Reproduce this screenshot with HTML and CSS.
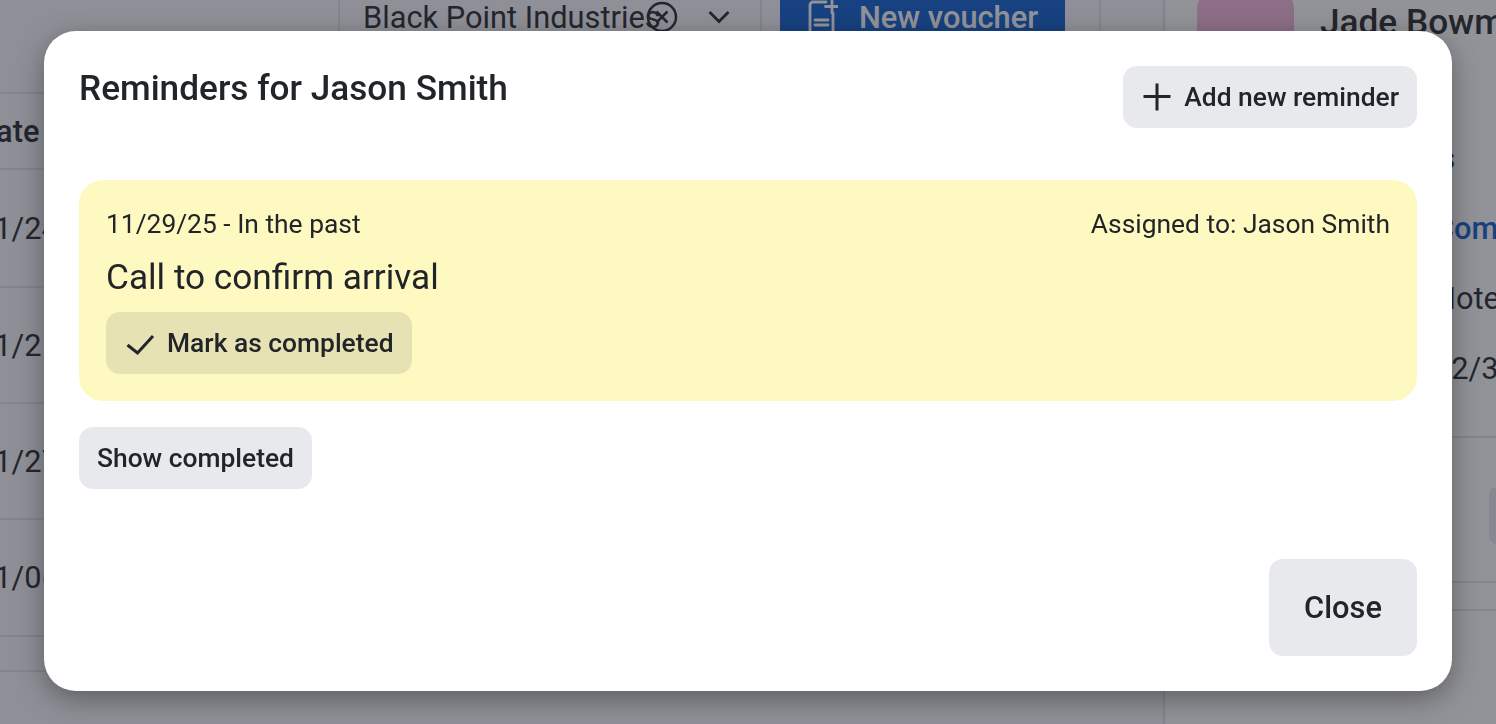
FILE: index.html
```html
<!DOCTYPE html>
<html lang="en">
<head>
  <meta charset="UTF-8" />
  <title>Reminders for Jason Smith</title>
  <link rel="stylesheet" href="styles.css">
</head>
<body>
  <!-- page behind the modal -->
  <div class="page">
    <div class="table-col">
      <div class="head-row"><span>Date</span></div>
      <div class="row r1"><span>11/24/25</span></div>
      <div class="row r2"><span>11/21/25</span></div>
      <div class="row r3"><span>11/27/25</span></div>
      <div class="row r4"><span>11/06/25</span></div>
      <div class="row r5"></div>
    </div>
    <div class="toolbar">
      <div class="company">
        <span class="company-name">Black Point Industries</span>
        <svg class="clear-icon" viewBox="0 0 32 32" width="32" height="32"><circle cx="16" cy="16" r="14" /><path d="M10.5 10.5l11 11M21.5 10.5l-11 11" /></svg>
        <svg class="chev-icon" viewBox="0 0 24 24" width="24" height="24"><path d="M2.5 7l9.5 9.5L21.5 7" /></svg>
      </div>
      <div class="voucher">
        <svg class="voucher-icon" viewBox="0 0 32 40" width="32" height="40"><path d="M20 5H7a3 3 0 0 0-3 3v26a3 3 0 0 0 3 3h17a3 3 0 0 0 3-3V16M26 3v13M19.5 9.5h13M9 23h13M9 28h13" /></svg>
        <span>New voucher</span>
      </div>
      <div class="toolbar-sep"></div>
    </div>
    <div class="side">
      <div class="person">
        <div class="avatar"></div>
        <div class="person-name">Jade Bowman</div>
      </div>
      <div class="side-info">
        <div class="side-row side-label">Details</div>
        <div class="side-row side-link">Company</div>
        <div class="side-row">Notes</div>
        <div class="side-row">12/31/25</div>
      </div>
      <div class="side-actions"><div class="side-btn"></div></div>
      <div class="side-foot"></div>
    </div>
  </div>

  <div class="overlay"></div>

  <div class="modal">
    <div class="modal-head">
      <h2>Reminders for Jason Smith</h2>
      <button class="btn btn-add">
        <svg viewBox="0 0 30 30" width="30" height="30"><path d="M15 1.5v27M1.5 14.5h27" /></svg>
        Add new reminder
      </button>
    </div>

    <div class="reminder">
      <div class="reminder-top">
        <span>11/29/25 - In the past</span>
        <span>Assigned to: Jason Smith</span>
      </div>
      <div class="reminder-title">Call to confirm arrival</div>
      <button class="btn btn-mark">
        <svg viewBox="0 0 30 30" width="30" height="30"><path d="M2.5 17l10 8L28 8" /></svg>
        Mark as completed
      </button>
    </div>

    <button class="btn btn-show">Show completed</button>

    <div class="modal-foot">
      <button class="btn btn-close">Close</button>
    </div>
  </div>
</body>
</html>
```

FILE: styles.css
```css
:root {
  --text-color: #212529;
  --btn-grey: #e8e9ed;
  --line: #dee2e6;
}
body {
  margin: 0;
  overflow: hidden;
  font-family: Roboto, sans-serif;
  color: var(--text-color);
  background: #fff;
}

/* page behind the modal */
.page {
  height: 724px;
  overflow: hidden;
  display: flex;
  font-size: 30.8px;
}
.table-col {
  width: 338px;
  flex: none;
  padding-top: 92px;
  background: #f8f8fc;
}
.head-row, .row {
  box-sizing: border-box;
  display: flex;
  align-items: center;
  white-space: nowrap;
  border-bottom: 2px solid var(--line);
}
.head-row {
  height: 78px;
  border-top: 2px solid var(--line);
  font-weight: 500;
}
.head-row span {
  margin-left: -24px;
}
.row span {
  margin-left: -23px;
}
.r1 { height: 118px; }
.r2 { height: 116px; }
.r3 { height: 116px; }
.r4 { height: 117px; }
.r5 { height: 35px; }

.toolbar {
  width: 825px;
  flex: none;
  display: flex;
  align-items: flex-start;
  background: #f8f8fc;
}
.company {
  width: 424px;
  height: 35px;
  flex: none;
  box-sizing: border-box;
  border-left: 2px solid var(--line);
  border-right: 2px solid var(--line);
  padding-left: 23px;
  line-height: 35px;
  position: relative;
}
.company-name {
  white-space: nowrap;
}
.clear-icon {
  position: absolute;
  left: 306px;
  top: 1px;
}
.clear-icon circle, .clear-icon path {
  fill: none;
  stroke: var(--text-color);
  stroke-width: 2.5;
}
.chev-icon {
  position: absolute;
  left: 367px;
  top: 5px;
}
.chev-icon path {
  fill: none;
  stroke: var(--text-color);
  stroke-width: 2.8;
}
.voucher {
  margin-left: 18px;
  width: 285px;
  height: 40px;
  flex: none;
  display: flex;
  align-items: flex-start;
  gap: 21px;
  padding-left: 26px;
  box-sizing: border-box;
  background: #0a5bd0;
  color: #fff;
  font-weight: 500;
}
.voucher-icon {
  margin-top: -3px;
}
.voucher-icon path {
  fill: none;
  stroke: #fff;
  stroke-width: 2.8;
  stroke-linecap: round;
}
.voucher span {
  line-height: 35px;
}
.toolbar-sep {
  margin-left: 34px;
  width: 2px;
  height: 40px;
  background: var(--line);
}

.side {
  flex: 1;
  min-width: 0;
  border-left: 2px solid var(--line);
}
.person {
  display: flex;
  gap: 26px;
  padding-left: 32px;
  margin-top: -8px;
}
.avatar {
  width: 97px;
  height: 96px;
  flex: none;
  border-radius: 16px;
  background: #f5b4dc;
}
.person-name {
  font-size: 35.2px;
  font-weight: 500;
  line-height: 60px;
  white-space: nowrap;
}
.side-info {
  margin-top: 35px;
  margin-bottom: 33px;
  padding-left: 269px;
}
.side-row {
  height: 70px;
  display: flex;
  align-items: center;
  white-space: nowrap;
}
.side-label {
  margin-left: -74px;
  font-weight: 500;
}
.side-link {
  color: #0a5bd0;
  font-weight: 500;
}
.side-actions {
  box-sizing: border-box;
  height: 147px;
  padding: 49px 0 0 324px;
  border-top: 2px solid var(--line);
  border-bottom: 2px solid var(--line);
}
.side-btn {
  width: 60px;
  height: 57px;
  border-radius: 8px;
  background: var(--btn-grey);
}
.side-foot {
  height: 26px;
  border-bottom: 2px solid var(--line);
}

/* dim layer */
.overlay {
  position: fixed;
  inset: 0;
  background: rgba(37, 39, 49, 0.5);
}

/* modal */
.modal {
  position: fixed;
  left: 44px;
  top: 31px;
  width: 1408px;
  height: 660px;
  box-sizing: border-box;
  padding: 35px;
  background: #fff;
  border-radius: 32px;
  box-shadow: 0 8px 28px rgba(0, 0, 0, 0.35);
  display: flex;
  flex-direction: column;
  align-items: flex-start;
}
.modal-head {
  width: 100%;
  display: flex;
  justify-content: space-between;
  align-items: flex-start;
  margin-bottom: 52px;
}
.modal-head h2 {
  margin: 0;
  font-size: 35.2px;
  font-weight: 500;
  line-height: 44px;
}
.btn {
  border: none;
  font-family: inherit;
  font-size: 26.4px;
  font-weight: 500;
  color: var(--text-color);
  cursor: pointer;
  display: flex;
  align-items: center;
  white-space: nowrap;
}
.btn svg path {
  fill: none;
  stroke: var(--text-color);
  stroke-width: 3;
}
.btn-add {
  height: 62px;
  padding: 0 18px 0 19px;
  gap: 12px;
  background: var(--btn-grey);
  border-radius: 14px;
}
.reminder {
  width: 100%;
  box-sizing: border-box;
  height: 221px;
  padding: 27px;
  background: #fef8c1;
  border-radius: 24px;
}
.reminder-top {
  display: flex;
  justify-content: space-between;
  font-size: 26.4px;
  line-height: 34px;
}
.reminder-title {
  font-size: 35.2px;
  line-height: 44px;
  margin-top: 14px;
  margin-bottom: 13px;
}
.btn-mark {
  height: 62px;
  padding: 0 18px 0 19px;
  gap: 12px;
  background: #e7e2b3;
  border-radius: 14px;
}
.btn-show {
  margin-top: 26px;
  height: 62px;
  padding: 0 18px;
  background: var(--btn-grey);
  border-radius: 14px;
}
.modal-foot {
  margin-top: auto;
  width: 100%;
  display: flex;
  justify-content: flex-end;
}
.btn-close {
  width: 148px;
  height: 97px;
  justify-content: center;
  background: var(--btn-grey);
  border-radius: 14px;
  font-size: 30.8px;
}
```
